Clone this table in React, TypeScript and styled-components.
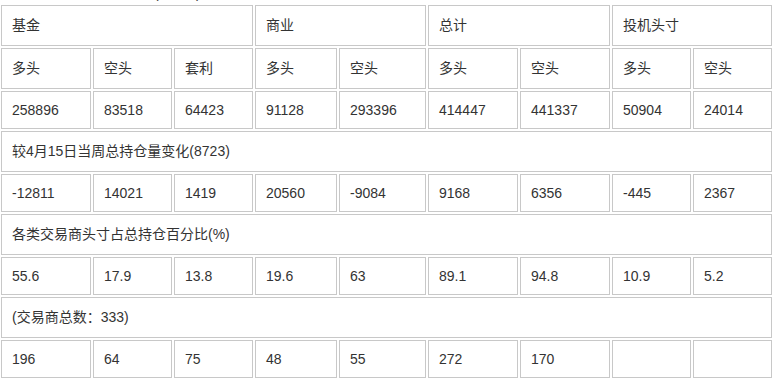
import React from "react";
import styled, { createGlobalStyle } from "styled-components";

const GlobalStyle = createGlobalStyle`
  html, body {
    margin: 0;
    padding: 0;
    background: #fff;
    overflow: hidden;
  }
  body {
    font-family: "Liberation Sans", Arial, "Noto Sans CJK SC", sans-serif;
    font-size: 14px;
    color: #333;
  }
`;

// column widths measured off the page (border box of each cell)
const colWidths = [90, 79, 79, 82, 87, 90, 90, 79, 79];

const groups = [
  { name: "基金", span: 3 },
  { name: "商业", span: 2 },
  { name: "总计", span: 2 },
  { name: "投机头寸", span: 2 },
];

const sides = ["多头", "空头", "套利", "多头", "空头", "多头", "空头", "多头", "空头"];

const sections = [
  {
    values: ["258896", "83518", "64423", "91128", "293396", "414447", "441337", "50904", "24014"],
  },
  {
    title: "较4月15日当周总持仓量变化(8723)",
    values: ["-12811", "14021", "1419", "20560", "-9084", "9168", "6356", "-445", "2367"],
  },
  {
    title: "各类交易商头寸占总持仓百分比(%)",
    values: ["55.6", "17.9", "13.8", "19.6", "63", "89.1", "94.8", "10.9", "5.2"],
  },
  {
    title: "(交易商总数：333)",
    values: ["196", "64", "75", "48", "55", "272", "170", "", ""],
  },
];

export default function App() {
  return (
    <>
      <GlobalStyle />
      <Page>
        <Caption>美国商品期货交易委员会(CFTC)持仓报告（单位：手）如下：</Caption>
        <Table>
          <colgroup>
            {colWidths.map((w, i) => (
              <col key={i} style={{ width: w }} />
            ))}
          </colgroup>
          <tbody>
            <Row $cjk>
              {groups.map((g) => (
                <Cell key={g.name} colSpan={g.span}>
                  {g.name}
                </Cell>
              ))}
            </Row>
            <Row $cjk>
              {sides.map((s, i) => (
                <Cell key={i}>{s}</Cell>
              ))}
            </Row>
            {sections.map((sec, i) => (
              <React.Fragment key={i}>
                {sec.title && (
                  <Row $cjk>
                    <Cell colSpan={9}>{sec.title}</Cell>
                  </Row>
                )}
                <Row>
                  {sec.values.map((v, j) => (
                    <Cell key={j}>{v}</Cell>
                  ))}
                </Row>
              </React.Fragment>
            ))}
          </tbody>
        </Table>
      </Page>
    </>
  );
}

const Page = styled.div`
  width: 774px;
  height: 380px;
  overflow: hidden;
`;

// the line above the table is mostly scrolled out of view
const Caption = styled.p`
  margin: -16px 0 0 0;
  line-height: 19px;
  white-space: nowrap;
`;

const Table = styled.table`
  table-layout: fixed;
  width: 775px;
  margin: 0 0 0 -1px;
  border-collapse: separate;
  border-spacing: 2px;
`;

// rows holding Chinese text sit a little taller than the number rows
const Row = styled.tr<{ $cjk?: boolean }>`
  line-height: ${(p) => (p.$cjk ? "19px" : "16px")};
`;

const Cell = styled.td`
  box-sizing: border-box;
  padding: 10px;
  border: 1px solid #c8c8c8;
  text-align: left;
  vertical-align: middle;
  white-space: nowrap;
  overflow: hidden;
`;
